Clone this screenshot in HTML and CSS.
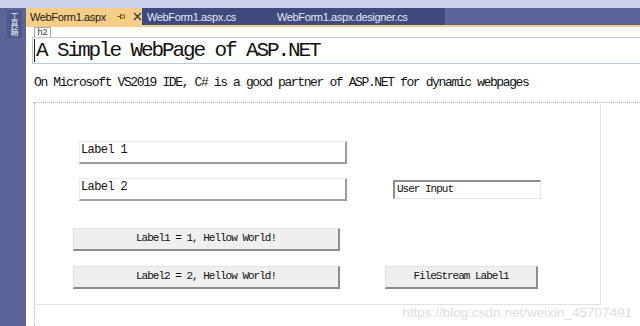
FILE: index.html
```html
<!DOCTYPE html>
<html lang="zh-CN">
<head>
  <meta charset="UTF-8">
  <title>WebForm1.aspx - Design</title>
  <link rel="stylesheet" href="styles.css">
</head>
<body>
  <div class="topstrip"></div>
  <div class="ide">
    <aside class="toolbox">
      <div class="toolbox-tab">工具箱</div>
    </aside>
    <main class="editor">
      <div class="tabbar">
        <div class="tab active">
          <span class="tab-name">WebForm1.aspx</span>
          <svg class="pin" width="9" height="9" viewBox="0 0 9 9">
            <path d="M0.5 4.5h3M3.5 2v5M3.5 3h4M3.5 6h4M7.5 3v3" fill="none" stroke="#6b5522" stroke-width="1"/>
          </svg>
          <svg class="close" width="9" height="9" viewBox="0 0 9 9">
            <path d="M1 1l7 7M8 1l-7 7" stroke="#3a3320" stroke-width="1.3"/>
          </svg>
        </div>
        <div class="tab">WebForm1.aspx.cs</div>
        <div class="tab wide">WebForm1.aspx.designer.cs</div>
      </div>
      <div class="design">
        <div class="tag">h2</div>
        <div class="heading"><span class="caret">A Simple WebPage of ASP.NET</span></div>
        <p class="intro">On Microsoft VS2019 IDE, C# is a good partner of ASP.NET for dynamic webpages</p>
        <div class="form-area">
          <div class="panel">
            <div class="row">
              <div class="label">Label 1</div>
            </div>
            <div class="row row-gap">
              <div class="label">Label 2</div>
              <div class="textbox">User Input</div>
            </div>
            <div class="row row-buttons">
              <div class="button wide-btn">Label1 = 1, Hellow World!</div>
            </div>
            <div class="row row-last">
              <div class="button wide-btn">Label2 = 2, Hellow World!</div>
              <div class="button small-btn">FileStream Label1</div>
            </div>
          </div>
        </div>
      </div>
    </main>
  </div>
  <div class="watermark">https://blog.csdn.net/weixin_45707491</div>
</body>
</html>
```

FILE: styles.css
```css
* {
  box-sizing: border-box;
}

html, body {
  margin: 0;
  height: 326px;
  overflow: hidden;
}

body {
  position: relative;
  background: #ffffff;
  font-family: 'Liberation Mono', monospace;
  color: #111;
}

.topstrip {
  height: 8px;
  background: #ccd0ec;
}

.ide {
  display: flex;
  height: 318px;
}

.toolbox {
  width: 26px;
  background: #5c6599;
  padding: 2px 0 0 7px;
}

.toolbox-tab {
  width: 15px;
  height: 28px;
  background: #4d5789;
  writing-mode: vertical-rl;
  font-family: 'Noto Sans CJK SC', sans-serif;
  font-size: 8px;
  line-height: 15px;
  color: #eef0fa;
  text-align: center;
}

.editor {
  flex: 1;
  display: flex;
  flex-direction: column;
}

.tabbar {
  display: flex;
  height: 19px;
  background: #5c6599;
  border-bottom: 2px solid #f5cd86;
}

.tab {
  width: 130px;
  padding: 1px 0 0 5px;
  background: #3f4a7e;
  color: #e6e8f4;
  font-family: 'Liberation Sans', sans-serif;
  font-size: 11px;
  letter-spacing: -0.35px;
  line-height: 16px;
  white-space: nowrap;
}

.tab.wide {
  width: 173px;
}

.tab.active {
  width: 116px;
  display: flex;
  align-items: center;
  padding: 0 0 0 4px;
  background: #f5cd86;
  color: #222;
}

.tab-name {
  width: 87px;
}

.pin {
  margin-right: 7px;
}

.design {
  flex: 1;
  display: flex;
  flex-direction: column;
  padding-left: 6px;
  overflow: hidden;
}

.tag {
  width: 17px;
  height: 10px;
  margin-left: 2px;
  border: 1px solid #a8a8a8;
  border-bottom: none;
  font-family: 'Liberation Sans', sans-serif;
  font-size: 9px;
  line-height: 9px;
  text-align: center;
  color: #333;
}

.heading {
  height: 27px;
  border: 1px solid #b9cadc;
  border-right: none;
  padding: 2px 0 0 1px;
  font-size: 21px;
  letter-spacing: -2.1px;
  line-height: 22px;
}

.caret {
  border-left: 1px solid #222;
  padding-left: 1px;
}

.intro {
  margin: 11px 0 0 2px;
  font-size: 13px;
  letter-spacing: -1.38px;
  line-height: 15px;
}

.form-area {
  flex: 1;
  margin: 12px 0 0 2px;
  border-top: 1px dotted #b8b8b8;
  border-left: 1px dotted #b8b8b8;
}

.panel {
  width: 566px;
  padding: 38px 0 15px 38px;
  border-right: 1px solid #e2e2e2;
  border-bottom: 1px solid #e2e2e2;
}

.row {
  display: flex;
  align-items: flex-start;
}

.row-gap {
  margin-top: 14px;
}

.row-buttons {
  margin-top: 27px;
}

.row-last {
  margin-top: 15px;
}

.label {
  width: 268px;
  height: 23px;
  margin-left: 6px;
  padding: 1px 0 0 1px;
  border-top: 1px solid #ececec;
  border-left: 1px solid #ececec;
  border-right: 2px solid #9c9c9c;
  border-bottom: 2px solid #9c9c9c;
  font-size: 12px;
  letter-spacing: -0.6px;
  line-height: 14px;
}

.textbox {
  width: 148px;
  height: 19px;
  margin: 2px 0 0 46px;
  padding: 1px 0 0 2px;
  border-top: 2px solid #8e8e8e;
  border-left: 2px solid #8e8e8e;
  border-right: 1px solid #e6e6e6;
  border-bottom: 1px solid #e6e6e6;
  font-size: 11px;
  letter-spacing: -1px;
  line-height: 13px;
}

.button {
  height: 23px;
  background: #efefef;
  border-top: 1px solid #e2e2e2;
  border-left: 1px solid #e2e2e2;
  border-right: 2px solid #8c8c8c;
  border-bottom: 2px solid #8c8c8c;
  font-size: 11px;
  letter-spacing: -1px;
  line-height: 19px;
  text-align: center;
}

.wide-btn {
  width: 267px;
}

.small-btn {
  width: 153px;
  margin-left: 45px;
}

.watermark {
  position: absolute;
  right: 8px;
  bottom: 6px;
  font-family: 'Liberation Sans', sans-serif;
  font-size: 13.5px;
  color: #dedede;
}
```
